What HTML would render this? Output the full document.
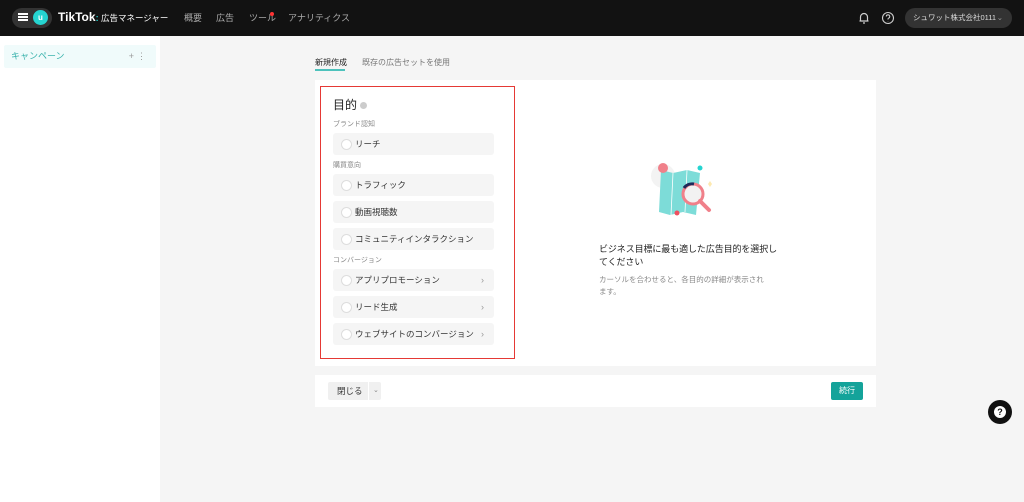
<!DOCTYPE html><html><head><meta charset="utf-8"><style>
*{margin:0;padding:0;box-sizing:border-box}
body{width:1024px;height:502px;background:#f5f5f5;font-family:"Liberation Sans","Noto Sans CJK JP",sans-serif;position:relative;overflow:hidden;color:#222}
.a{position:absolute}
.top{left:0;top:0;width:1024px;height:36px;background:#121212}
.nav{color:#aaa;font-size:9px;top:11px}
.opt{position:absolute;left:333px;width:161px;height:22px;background:#f5f5f5;border-radius:3px;font-size:8.5px;color:#333;line-height:22px;padding-left:22px}
.opt:before{content:"";position:absolute;left:8px;top:6px;width:9px;height:9px;border:1px solid #ddd;border-radius:50%;background:#fff}
.opt .c{position:absolute;right:10px;color:#999;font-size:9px}
.lbl{position:absolute;left:333px;font-size:7px;color:#888}
</style></head><body>
<div class="a top"></div>
<div class="a" style="left:12px;top:8px;width:40px;height:20px;border-radius:10px;background:#333"></div>
<div class="a" style="left:18px;top:13px;width:10px;height:2px;background:#fff;box-shadow:0 3px 0 #fff,0 6px 0 #fff"></div>
<div class="a" style="left:33px;top:10px;width:15px;height:15px;border-radius:50%;background:#25d4d0;color:#fff;font-size:8px;text-align:center;line-height:15px;font-weight:bold">u</div>
<div class="a" style="left:58px;top:10px;color:#fff;font-size:12px;font-weight:bold">TikTok<span style="color:#25d4d0;font-size:9px">:</span><span style="font-size:8.5px;font-weight:normal"> 広告マネージャー</span></div>
<div class="a nav" style="left:184px">概要</div>
<div class="a nav" style="left:216px">広告</div>
<div class="a nav" style="left:249px">ツール</div>
<div class="a" style="left:270px;top:12px;width:4px;height:4px;border-radius:50%;background:#f33"></div>
<div class="a nav" style="left:288px">アナリティクス</div>
<svg class="a" style="left:857px;top:11px" width="14" height="14" viewBox="0 0 14 14" fill="none" stroke="#ccc" stroke-width="1.2"><path d="M3.5 10V6a3.5 3.5 0 0 1 7 0v4zM2.5 10h9M6 12h2"/></svg>
<svg class="a" style="left:881px;top:11px" width="14" height="14" viewBox="0 0 14 14" fill="none" stroke="#ccc" stroke-width="1.1"><circle cx="7" cy="7" r="5.5"/><path d="M5.3 5.5a1.7 1.7 0 1 1 2.3 1.6c-.5.2-.6.5-.6 1v.4M7 10v.2"/></svg>
<div class="a" style="left:905px;top:8px;width:107px;height:20px;border-radius:10px;background:#333;color:#ddd;font-size:7.5px;line-height:20px;padding-left:8px">シュワット株式会社0111<span style="position:absolute;right:9px;color:#999">⌄</span></div>
<div class="a" style="left:0;top:36px;width:160px;height:466px;background:#fff"></div>
<div class="a" style="left:4px;top:45px;width:152px;height:23px;background:#f0fbfb;border-radius:2px;color:#3bb3ad;font-size:9px;line-height:23px;padding-left:7px">キャンペーン<span style="position:absolute;right:22px;color:#999">+</span><span style="position:absolute;right:10px;color:#999">⋮</span></div>
<div class="a" style="left:315px;top:57px;font-size:8px;color:#222">新規作成</div>
<div class="a" style="left:362px;top:57px;font-size:8px;color:#777">既存の広告セットを使用</div>
<div class="a" style="left:315px;top:69px;width:30px;height:2px;background:#4dc2bc"></div>
<div class="a" style="left:315px;top:80px;width:561px;height:286px;background:#fff"></div>
<div class="a" style="left:320px;top:86px;width:195px;height:273px;border:1.5px solid #e53935"></div>
<div class="a" style="left:333px;top:96px;font-size:12px;color:#222">目的 <span style="display:inline-block;width:7px;height:7px;border-radius:50%;background:#ccc"></span></div>
<div class="lbl" style="top:119px">ブランド認知</div>
<div class="opt" style="top:133px">リーチ</div>
<div class="lbl" style="top:160px">購買意向</div>
<div class="opt" style="top:174px">トラフィック</div>
<div class="opt" style="top:201px">動画視聴数</div>
<div class="opt" style="top:228px">コミュニティインタラクション</div>
<div class="lbl" style="top:255px">コンバージョン</div>
<div class="opt" style="top:269px">アプリプロモーション<span class="c">›</span></div>
<div class="opt" style="top:296px">リード生成<span class="c">›</span></div>
<div class="opt" style="top:323px">ウェブサイトのコンバージョン<span class="c">›</span></div>
<svg class="a" style="left:645px;top:160px" width="80" height="70" viewBox="0 0 80 70">
<circle cx="18" cy="16" r="12" fill="#f3f3f3"/>
<path d="M16 10l12 3 14-3 13 3-4 42-13-3-13 3-11-3z" fill="#7ddcd8"/>
<path d="M28 13l-2 42M42 10l-2 42" stroke="#fff" stroke-width="0.8"/>
<circle cx="18" cy="8" r="5" fill="#f0808a"/>
<circle cx="55" cy="8" r="2.5" fill="#25d4d0"/>
<path d="M63 24l2-3 2 3-2 3z" fill="#fde9b0"/>
<circle cx="48" cy="34" r="10" fill="#f2f2f2" stroke="#f0808a" stroke-width="3"/>
<path d="M39 28a10 10 0 0 1 10-4" stroke="#1e2a5a" stroke-width="3" fill="none"/>
<path d="M55 41l9 9" stroke="#f0808a" stroke-width="4" stroke-linecap="round"/>
<circle cx="32" cy="53" r="2.5" fill="#f05060"/>
</svg>
<div class="a" style="left:599px;top:243px;width:180px;font-size:9px;letter-spacing:-0.1px;line-height:13px;color:#222">ビジネス目標に最も適した広告目的を選択してください</div>
<div class="a" style="left:599px;top:274px;width:172px;font-size:7.5px;line-height:12px;color:#888">カーソルを合わせると、各目的の詳細が表示されます。</div>
<div class="a" style="left:315px;top:375px;width:561px;height:32px;background:#fff"></div>
<div class="a" style="left:328px;top:382px;width:53px;height:18px;background:#f0f0f0;border-radius:2px;font-size:8.5px;line-height:18px;padding-left:9px;color:#333">閉じる<span style="position:absolute;left:40px;color:#888;font-size:7px;border-left:1px solid #fff;padding-left:4px">⌄</span></div>
<div class="a" style="left:831px;top:382px;width:32px;height:18px;background:#14a39a;border-radius:2px;color:#fff;font-size:8px;line-height:18px;text-align:center">続行</div>
<div class="a" style="left:988px;top:400px;width:24px;height:24px;border-radius:50%;background:#111"></div>
<div class="a" style="left:994px;top:406px;width:12px;height:12px;border-radius:50%;background:#fff;color:#111;font-size:9px;font-weight:bold;text-align:center;line-height:12px">?</div>
</body></html>
